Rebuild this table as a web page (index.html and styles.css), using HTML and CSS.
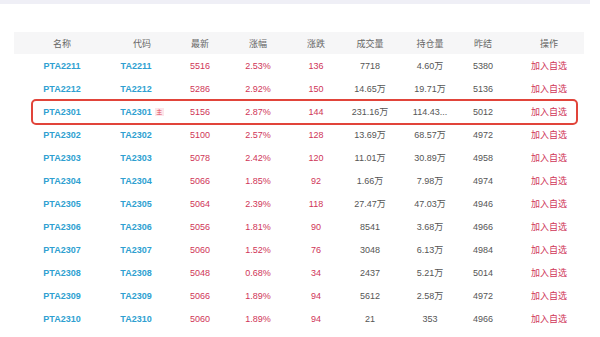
FILE: index.html
```html
<!DOCTYPE html>
<html lang="zh">
<head>
<meta charset="utf-8">
<link rel="stylesheet" href="styles.css">
</head>
<body>
<div class="topbar"></div>
<div class="table">
  <div class="row head">
    <div>名称</div><div>代码</div><div>最新</div><div>涨幅</div><div>涨跌</div><div>成交量</div><div>持仓量</div><div>昨结</div><div class="op">操作</div>
  </div>
  <div class="row"><div class="name">PTA2211</div><div class="name">TA2211<span class="badge off">主</span></div><div class="up">5516</div><div class="up">2.53%</div><div class="up">136</div><div class="num">7718</div><div class="num">4.60万</div><div class="num">5380</div><div class="op add">加入自选</div></div>
  <div class="row"><div class="name">PTA2212</div><div class="name">TA2212<span class="badge off">主</span></div><div class="up">5286</div><div class="up">2.92%</div><div class="up">150</div><div class="num">14.65万</div><div class="num">19.71万</div><div class="num">5136</div><div class="op add">加入自选</div></div>
  <div class="row hl"><div class="name">PTA2301</div><div class="name">TA2301<span class="badge">主</span></div><div class="up">5156</div><div class="up">2.87%</div><div class="up">144</div><div class="num">231.16万</div><div class="num">114.43...</div><div class="num">5012</div><div class="op add">加入自选</div><span class="mark"></span></div>
  <div class="row"><div class="name">PTA2302</div><div class="name">TA2302<span class="badge off">主</span></div><div class="up">5100</div><div class="up">2.57%</div><div class="up">128</div><div class="num">13.69万</div><div class="num">68.57万</div><div class="num">4972</div><div class="op add">加入自选</div></div>
  <div class="row"><div class="name">PTA2303</div><div class="name">TA2303<span class="badge off">主</span></div><div class="up">5078</div><div class="up">2.42%</div><div class="up">120</div><div class="num">11.01万</div><div class="num">30.89万</div><div class="num">4958</div><div class="op add">加入自选</div></div>
  <div class="row"><div class="name">PTA2304</div><div class="name">TA2304<span class="badge off">主</span></div><div class="up">5066</div><div class="up">1.85%</div><div class="up">92</div><div class="num">1.66万</div><div class="num">7.98万</div><div class="num">4974</div><div class="op add">加入自选</div></div>
  <div class="row"><div class="name">PTA2305</div><div class="name">TA2305<span class="badge off">主</span></div><div class="up">5064</div><div class="up">2.39%</div><div class="up">118</div><div class="num">27.47万</div><div class="num">47.03万</div><div class="num">4946</div><div class="op add">加入自选</div></div>
  <div class="row"><div class="name">PTA2306</div><div class="name">TA2306<span class="badge off">主</span></div><div class="up">5056</div><div class="up">1.81%</div><div class="up">90</div><div class="num">8541</div><div class="num">3.68万</div><div class="num">4966</div><div class="op add">加入自选</div></div>
  <div class="row"><div class="name">PTA2307</div><div class="name">TA2307<span class="badge off">主</span></div><div class="up">5060</div><div class="up">1.52%</div><div class="up">76</div><div class="num">3048</div><div class="num">6.13万</div><div class="num">4984</div><div class="op add">加入自选</div></div>
  <div class="row"><div class="name">PTA2308</div><div class="name">TA2308<span class="badge off">主</span></div><div class="up">5048</div><div class="up">0.68%</div><div class="up">34</div><div class="num">2437</div><div class="num">5.21万</div><div class="num">5014</div><div class="op add">加入自选</div></div>
  <div class="row"><div class="name">PTA2309</div><div class="name">TA2309<span class="badge off">主</span></div><div class="up">5066</div><div class="up">1.89%</div><div class="up">94</div><div class="num">5612</div><div class="num">2.58万</div><div class="num">4972</div><div class="op add">加入自选</div></div>
  <div class="row"><div class="name">PTA2310</div><div class="name">TA2310<span class="badge off">主</span></div><div class="up">5060</div><div class="up">1.89%</div><div class="up">94</div><div class="num">21</div><div class="num">353</div><div class="num">4966</div><div class="op add">加入自选</div></div>
</div>
</body>
</html>
```
FILE: styles.css
```css
html, body {
  margin: 0;
  padding: 0;
  background: #ffffff;
  font-family: "Liberation Sans", "Noto Sans CJK SC", sans-serif;
  font-size: 9px;
}
.topbar {
  height: 4px;
  width: 590px;
  background: #efeff6;
}
.table {
  margin: 28px 0 0 14px;
  width: 570px;
}
.row {
  display: grid;
  grid-template-columns: 96px 64px 52px 64px 52px 56px 64px 42px 80px;
  height: 23px;
  align-items: center;
  text-align: center;
  white-space: nowrap;
  position: relative;
}
.row.head {
  height: 22px;
  background: #f6f6f7;
  color: #666666;
}
.op {
  padding-left: 10px;
}
.name {
  color: #2f9fd1;
  font-weight: bold;
}
.up {
  color: #cf3557;
}
.num {
  color: #555555;
}
.add {
  color: #cf3557;
}
.badge {
  display: inline-block;
  margin-left: 3px;
  padding: 0 1.5px;
  font-size: 6px;
  line-height: 8px;
  font-weight: normal;
  color: #e0485a;
  background: #fde6ea;
  vertical-align: 1px;
}
.badge.off {
  visibility: hidden;
}
.mark {
  position: absolute;
  left: 17px;
  top: -1px;
  width: 547px;
  height: 26px;
  box-sizing: border-box;
  border: 2px solid #e1443a;
  border-radius: 5px;
}
```
